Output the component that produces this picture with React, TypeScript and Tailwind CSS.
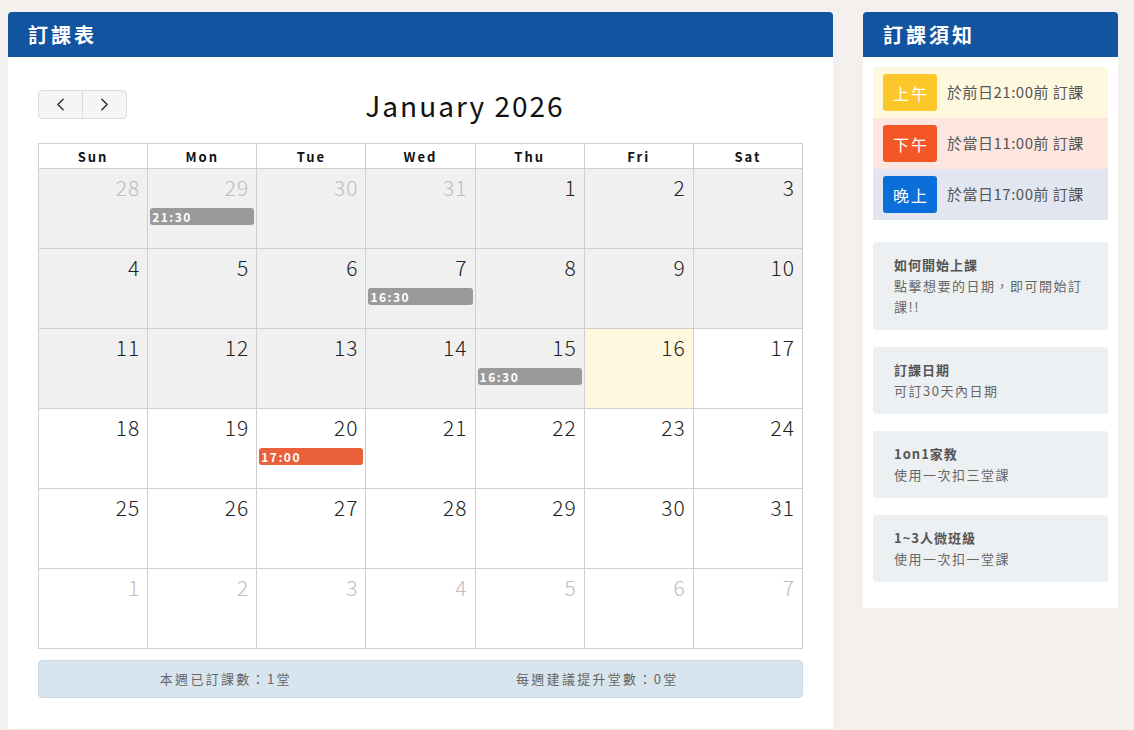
import React from 'react';
import { ChevronLeft, ChevronRight } from 'lucide-react';

type Day = {
  n: number;
  other?: boolean;
  past?: boolean;
  today?: boolean;
  event?: { time: string; color: string };
};

const GRAY = 'bg-[#9a9a9a]';
const ORANGE = 'bg-[#e9603b]';

// 2026年1月の表示（前後の月を含む6週）
const weeks: Day[][] = [
  [
    { n: 28, other: true, past: true },
    { n: 29, other: true, past: true, event: { time: '21:30', color: GRAY } },
    { n: 30, other: true, past: true },
    { n: 31, other: true, past: true },
    { n: 1, past: true },
    { n: 2, past: true },
    { n: 3, past: true },
  ],
  [
    { n: 4, past: true },
    { n: 5, past: true },
    { n: 6, past: true },
    { n: 7, past: true, event: { time: '16:30', color: GRAY } },
    { n: 8, past: true },
    { n: 9, past: true },
    { n: 10, past: true },
  ],
  [
    { n: 11, past: true },
    { n: 12, past: true },
    { n: 13, past: true },
    { n: 14, past: true },
    { n: 15, past: true, event: { time: '16:30', color: GRAY } },
    { n: 16, today: true },
    { n: 17 },
  ],
  [
    { n: 18 },
    { n: 19 },
    { n: 20, event: { time: '17:00', color: ORANGE } },
    { n: 21 },
    { n: 22 },
    { n: 23 },
    { n: 24 },
  ],
  [
    { n: 25 },
    { n: 26 },
    { n: 27 },
    { n: 28 },
    { n: 29 },
    { n: 30 },
    { n: 31 },
  ],
  [1, 2, 3, 4, 5, 6, 7].map((n) => ({ n, other: true })),
];

const dayNames = ['Sun', 'Mon', 'Tue', 'Wed', 'Thu', 'Fri', 'Sat'];

const legend = [
  { label: '上午', text: '於前日21:00前 訂課', badge: 'bg-[#fbc72a]', row: 'bg-[#fef8df]' },
  { label: '下午', text: '於當日11:00前 訂課', badge: 'bg-[#f45626]', row: 'bg-[#fde6df]' },
  { label: '晚上', text: '於當日17:00前 訂課', badge: 'bg-[#0b6fd9]', row: 'bg-[#e1e6f0]' },
];

const notes = [
  { title: '如何開始上課', text: '點擊想要的日期，即可開始訂課!!' },
  { title: '訂課日期', text: '可訂30天內日期' },
  { title: '1on1家教', text: '使用一次扣三堂課' },
  { title: '1~3人微班級', text: '使用一次扣一堂課' },
];

function DayCell({ d }: { d: Day }) {
  const bg = d.today ? 'bg-[#fdf8de]' : d.past ? 'bg-[#f0f0f0]' : 'bg-white';
  return (
    <div className={`h-[80px] border-r border-b border-[#cfcfcf] ${bg} flex flex-col`}>
      <div
        className={`text-right pr-[7px] pt-[4px] text-[21px] leading-[28px] font-light tracking-[1px] ${
          d.other ? 'text-[#bdbdbd]' : 'text-[#222]'
        }`}
      >
        {d.n}
      </div>
      {d.event && (
        <div
          className={`mx-[2px] mt-[7px] h-[17px] rounded-[3px] ${d.event.color} text-white text-[12px] font-bold leading-[17px] pl-[2px] tracking-[1.5px]`}
        >
          {d.event.time}
        </div>
      )}
    </div>
  );
}

export default function App() {
  return (
    <div
      className="min-h-[730px] bg-[#f4f0ed] flex items-start pt-3 pl-2 gap-[30px]"
      style={{ fontFamily: '"Noto Sans CJK TC", "Noto Sans", sans-serif' }}
    >
      {/* 左：訂課表 */}
      <div className="w-[825px] bg-white rounded-t-[4px]">
        <div className="h-[45px] bg-[#1254a0] rounded-t-[4px] px-5 flex items-center text-white text-[20px] font-bold tracking-[3px]">
          訂課表
        </div>
        <div className="px-[30px] pt-[33px] pb-[31px]">
          <div className="flex justify-between items-center h-[29px] mb-[24px]">
            <div className="flex h-[29px] border border-[#dcdcdc] rounded-[4px] bg-[#f5f5f5]">
              <button className="w-[44px] flex items-center justify-center border-r border-[#dcdcdc] text-[#333]">
                <ChevronLeft size={21} strokeWidth={1.75} />
              </button>
              <button className="w-[43px] flex items-center justify-center text-[#333]">
                <ChevronRight size={21} strokeWidth={1.75} />
              </button>
            </div>
            <div className="text-[28px] leading-[30px] text-[#111] tracking-[2px]">January 2026</div>
            <div />
          </div>

          <div className="border-l border-t border-[#cfcfcf]">
            <div className="grid grid-cols-7">
              {dayNames.map((n) => (
                <div
                  key={n}
                  className="h-[25px] border-r border-b border-[#cfcfcf] text-center text-[13px] font-bold leading-[25px] tracking-[2px] text-[#111]"
                >
                  {n}
                </div>
              ))}
            </div>
            {weeks.map((w, i) => (
              <div key={i} className="grid grid-cols-7">
                {w.map((d, j) => (
                  <DayCell key={j} d={d} />
                ))}
              </div>
            ))}
          </div>

          <div className="mt-[11px] h-[38px] rounded-[4px] bg-[#d9e5ee] border border-[#c9d9e6] grid grid-cols-2 items-center text-center text-[13px] tracking-[2.3px] text-[#666]">
            <div className="pr-[8px]">本週已訂課數：1堂</div>
            <div className="pr-[28px]">每週建議提升堂數：0堂</div>
          </div>
        </div>
      </div>

      {/* 右：訂課須知 */}
      <div className="w-[255px] bg-white rounded-t-[4px]">
        <div className="h-[45px] bg-[#1254a0] rounded-t-[4px] px-5 flex items-center text-white text-[20px] font-bold tracking-[3px]">
          訂課須知
        </div>
        <div className="p-[10px] pb-[26px]">
          {legend.map((l) => (
            <div key={l.label} className={`h-[51px] ${l.row} flex items-center pl-[10px] gap-[10px]`}>
              <div
                className={`w-[54px] h-[37px] rounded-[3px] ${l.badge} text-white text-[16px] tracking-[2px] pl-[2px] flex items-center justify-center`}
              >
                {l.label}
              </div>
              <div className="text-[15px] text-[#555] tracking-[0.5px]">{l.text}</div>
            </div>
          ))}

          <div className="mt-[22px] flex flex-col gap-[17px]">
            {notes.map((n) => (
              <div key={n.title} className="bg-[#edf0f2] rounded-[3px] px-[21px] pt-[12px] pb-[13px]">
                <div className="text-[13px] font-bold leading-[21px] text-[#555] tracking-[1px]">{n.title}</div>
                <div className="text-[13px] leading-[21px] text-[#666] tracking-[1.5px]">{n.text}</div>
              </div>
            ))}
          </div>
        </div>
      </div>
    </div>
  );
}
